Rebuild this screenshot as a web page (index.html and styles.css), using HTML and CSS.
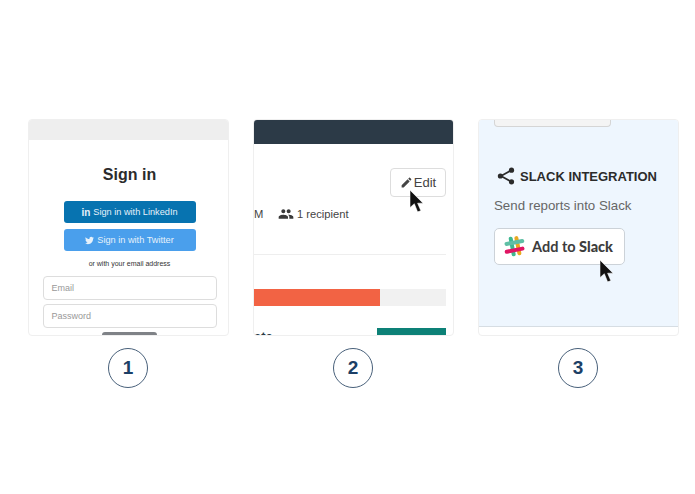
FILE: index.html
```html
<!DOCTYPE html>
<html lang="en">
<head>
    <meta charset="UTF-8">
    <meta name="viewport" content="width=device-width, initial-scale=1.0">
    <title>Connect your reports</title>
    <link rel="stylesheet" href="styles.css">
</head>
<body>
    <div class="steps">
        <div class="step">
            <div class="card">
                <div class="signin-head"></div>
                <div class="signin-body">
                    <h2 class="signin-title">Sign in</h2>
                    <button class="social-btn linkedin-btn"><b class="in-mark">in</b> Sign in with LinkedIn</button>
                    <button class="social-btn twitter-btn">
                        <svg class="bird" viewBox="0 0 24 24"><path d="M23.953 4.57a10 10 0 01-2.825.775 4.958 4.958 0 002.163-2.723c-.951.555-2.005.959-3.127 1.184a4.92 4.92 0 00-8.384 4.482C7.69 8.095 4.067 6.13 1.64 3.162a4.822 4.822 0 00-.666 2.475c0 1.71.87 3.213 2.188 4.096a4.904 4.904 0 01-2.228-.616v.06a4.923 4.923 0 003.946 4.827 4.996 4.996 0 01-2.212.085 4.936 4.936 0 004.604 3.417 9.867 9.867 0 01-6.102 2.105c-.39 0-.779-.023-1.17-.067a13.995 13.995 0 007.557 2.209c9.053 0 13.998-7.496 13.998-13.985 0-.21 0-.42-.015-.63A9.935 9.935 0 0024 4.59z"/></svg>
                        Sign in with Twitter
                    </button>
                    <div class="signin-or">or with your email address</div>
                    <div class="field">Email</div>
                    <div class="field">Password</div>
                    <div class="signin-submit"></div>
                </div>
            </div>
            <div class="step-num">1</div>
        </div>

        <div class="step">
            <div class="card">
                <div class="report-head"></div>
                <div class="report-body">
                    <div class="edit-row">
                        <button class="edit-btn">
                            <svg class="pencil" viewBox="0 0 24 24"><path d="M3 17.25V21h3.75L17.81 9.94l-3.75-3.75L3 17.25zM20.71 7.04c.39-.39.39-1.02 0-1.41l-2.34-2.34c-.39-.39-1.02-.39-1.41 0l-1.83 1.83 3.75 3.75 1.83-1.83z"/></svg>
                            Edit
                        </button>
                    </div>
                    <div class="report-meta">
                        <span class="meta-time">M</span>
                        <svg class="people" viewBox="0 0 24 24"><path d="M16 11c1.66 0 2.99-1.34 2.99-3S17.66 5 16 5c-1.66 0-3 1.34-3 3s1.34 3 3 3zm-8 0c1.66 0 2.99-1.34 2.99-3S9.66 5 8 5C6.34 5 5 6.34 5 8s1.34 3 3 3zm0 2c-2.33 0-7 1.17-7 3.5V19h14v-2.5c0-2.33-4.67-3.5-7-3.5zm8 0c-.29 0-.62.02-.97.05 1.16.84 1.97 1.97 1.97 3.45V19h6v-2.5c0-2.33-4.67-3.5-7-3.5z"/></svg>
                        <span>1 recipient</span>
                    </div>
                    <div class="report-rule"></div>
                    <div class="bar"><div class="bar-fill" style="width: 65.8%"></div></div>
                    <div class="report-foot">
                        <span class="foot-text">ate</span>
                        <div class="foot-block"></div>
                    </div>
                </div>
                <svg class="cursor cursor-edit" viewBox="0 0 12 20"><path d="M0 0V16L4 12.5 7 20 10 19 7 12H12Z"/></svg>
            </div>
            <div class="step-num">2</div>
        </div>

        <div class="step">
            <div class="card">
                <div class="slack-panel">
                    <div class="slack-top-btn"></div>
                    <div class="slack-heading">
                        <svg class="share" viewBox="0 0 18 18">
                            <path d="M14 3.5 4 9l10 5.5" fill="none" stroke="#2b2b2b" stroke-width="1.7"/>
                            <circle cx="14.5" cy="3.2" r="2.6"/>
                            <circle cx="3.4" cy="9" r="2.6"/>
                            <circle cx="14.5" cy="14.8" r="2.6"/>
                        </svg>
                        <span>SLACK INTEGRATION</span>
                    </div>
                    <p class="slack-text">Send reports into Slack</p>
                    <button class="slack-btn">
                        <svg class="slack-logo" viewBox="0 0 20 20" fill="none" stroke-width="3.8" stroke-linecap="round">
                            <path d="M6.4 2.6 9.2 17.4" stroke="#3eb890"/>
                            <path d="M11.8 2 14.6 16.4" stroke="#e9a820"/>
                            <path d="M2.4 7.6 17.4 4.8" stroke="#5fbfa5"/>
                            <path d="M2.6 15 17.6 12" stroke="#e01563"/>
                        </svg>
                        <span>Add to <b>Slack</b></span>
                    </button>
                </div>
                <svg class="cursor cursor-slack" viewBox="0 0 12 20"><path d="M0 0V16L4 12.5 7 20 10 19 7 12H12Z"/></svg>
            </div>
            <div class="step-num">3</div>
        </div>
    </div>
</body>
</html>
```

FILE: styles.css
```css
body {
    margin: 0;
    background-color: white;
    font-family: "Liberation Sans", Arial, sans-serif;
    color: #333;
}
button {
    font-family: inherit;
    cursor: pointer;
}
.steps {
    display: flex;
    gap: 24px;
    padding: 119px 0 0 28px;
}
.step {
    display: flex;
    flex-direction: column;
    align-items: center;
    gap: 12px;
}
.card {
    position: relative;
    box-sizing: border-box;
    width: 201px;
    height: 217px;
    overflow: hidden;
    background-color: white;
    border: 1px solid #efefef;
    border-radius: 4px;
}
.step-num {
    box-sizing: border-box;
    width: 40px;
    height: 40px;
    margin-right: 1px;
    display: flex;
    align-items: center;
    justify-content: center;
    border: 1px solid #48607a;
    border-radius: 50%;
    color: #1c3f66;
    font-size: 19px;
    font-weight: bold;
}
.cursor {
    position: absolute;
    width: 13px;
    height: 22px;
    fill: #111;
    stroke: white;
    stroke-width: 0.5;
}

/* step 1 */
.signin-head {
    height: 20px;
    background-color: #eeeeee;
}
.signin-body {
    display: flex;
    flex-direction: column;
    align-items: center;
    padding-left: 2px;
}
.signin-title {
    margin: 25px 0 16px;
    font-size: 16px;
    line-height: 20px;
    color: #2b2b2b;
}
.social-btn {
    width: 132px;
    height: 22px;
    padding: 0;
    border: none;
    border-radius: 3px;
    color: #e6f1fa;
    font-size: 9.2px;
    display: flex;
    align-items: center;
    justify-content: center;
    gap: 3px;
}
.linkedin-btn {
    background-color: #0773b0;
    margin-bottom: 6px;
}
.twitter-btn {
    background-color: #4a9fec;
}
.in-mark {
    font-size: 10px;
}
.bird {
    width: 9px;
    height: 9px;
    fill: #e6f1fa;
}
.signin-or {
    margin: 8px 0 8px;
    font-size: 7px;
    line-height: 9px;
    color: #333;
}
.field {
    box-sizing: border-box;
    width: 174px;
    height: 24px;
    margin-bottom: 4px;
    padding-left: 8px;
    display: flex;
    align-items: center;
    background-color: white;
    border: 1px solid #dddddd;
    border-radius: 4px;
    color: #999;
    font-size: 9px;
}
.signin-submit {
    flex: none;
    width: 55px;
    height: 8px;
    background-color: #7f8287;
    border-radius: 3px;
}

/* step 2 */
.report-head {
    height: 24px;
    background-color: #2c3a47;
}
.report-body {
    padding-right: 7px;
}
.edit-row {
    display: flex;
    justify-content: flex-end;
    padding-top: 24px;
}
.edit-btn {
    box-sizing: border-box;
    width: 56px;
    height: 29px;
    padding: 0;
    display: flex;
    align-items: center;
    justify-content: center;
    gap: 1px;
    background-color: white;
    border: 1px solid #dddddd;
    border-radius: 4px;
    color: #444;
    font-size: 13px;
}
.pencil {
    width: 13px;
    height: 13px;
    fill: #444;
}
.report-meta {
    display: flex;
    align-items: center;
    margin-top: 9px;
    height: 16px;
    font-size: 11.2px;
    color: #444;
}
.meta-time {
    width: 24px;
}
.people {
    width: 16px;
    height: 16px;
    margin-right: 3px;
    fill: #3a3a3a;
}
.report-rule {
    margin-top: 32px;
    border-top: 1px solid #eeeeee;
}
.bar {
    height: 17px;
    margin-top: 34px;
    background-color: #f1f1f1;
}
.bar-fill {
    height: 100%;
    background-color: #f26344;
}
.report-foot {
    display: flex;
    justify-content: space-between;
    margin-top: 23px;
}
.foot-text {
    margin-top: 2px;
    font-size: 13px;
    font-weight: bold;
    line-height: 12px;
    color: #2c3a47;
}
.foot-block {
    width: 69px;
    height: 20px;
    margin-top: -1px;
    background-color: #0d8177;
}
.cursor-edit {
    top: 70px;
    left: 156px;
}

/* step 3 */
.slack-panel {
    box-sizing: border-box;
    height: 207px;
    padding-left: 15px;
    background-color: #eef6fe;
    border-bottom: 1px solid #d6dde3;
}
.slack-top-btn {
    box-sizing: border-box;
    width: 117px;
    height: 7px;
    background-color: #f4f4f4;
    border: 1px solid #d5d5d5;
    border-top: none;
    border-radius: 0 0 4px 4px;
}
.slack-heading {
    display: flex;
    align-items: center;
    gap: 5px;
    margin: 40px 0 0 3px;
    color: #2b2b2b;
    font-size: 13px;
    font-weight: bold;
}
.share {
    width: 18px;
    height: 18px;
    fill: #2b2b2b;
}
.slack-text {
    margin: 12px 0 14px;
    font-size: 13.3px;
    line-height: 17px;
    color: #666;
}
.slack-btn {
    box-sizing: border-box;
    width: 131px;
    height: 37px;
    padding: 0 0 0 9px;
    display: flex;
    align-items: center;
    gap: 7px;
    background-color: white;
    border: 1px solid #ccd2d8;
    border-radius: 5px;
    color: #3c3c3c;
    font-family: Lato, sans-serif;
    font-size: 14.5px;
    font-weight: bold;
}
.slack-btn b {
    font-weight: 900;
}
.slack-logo {
    width: 21px;
    height: 21px;
}
.cursor-slack {
    top: 140px;
    left: 121px;
}
```
